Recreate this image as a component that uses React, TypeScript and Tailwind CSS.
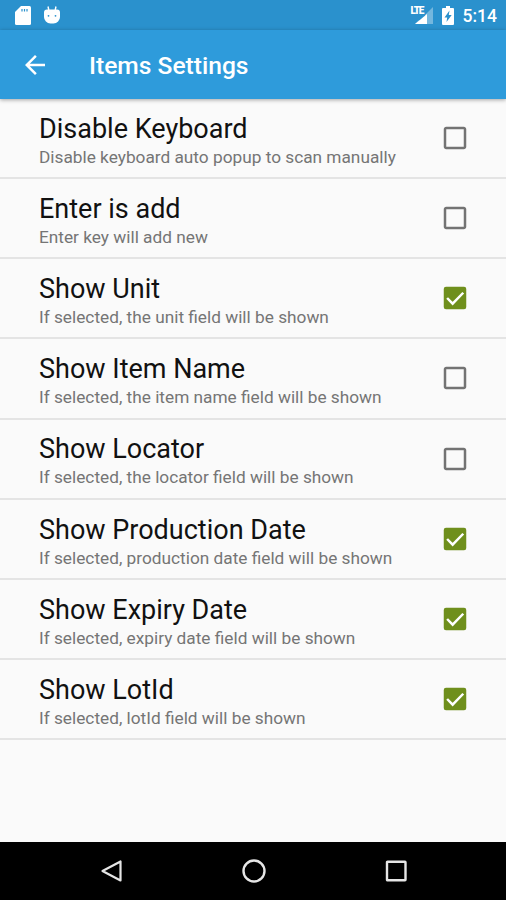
import clsx from "clsx"

const settings = [
  {
    title: "Disable Keyboard",
    summary: "Disable keyboard auto popup to scan manually",
    checked: false,
  },
  { title: "Enter is add", summary: "Enter key will add new", checked: false },
  {
    title: "Show Unit",
    summary: "If selected, the unit field will be shown",
    checked: true,
  },
  {
    title: "Show Item Name",
    summary: "If selected, the item name field will be shown",
    checked: false,
  },
  {
    title: "Show Locator",
    summary: "If selected, the locator field will be shown",
    checked: false,
  },
  {
    title: "Show Production Date",
    summary: "If selected, production date field will be shown",
    checked: true,
  },
  {
    title: "Show Expiry Date",
    summary: "If selected, expiry date field will be shown",
    checked: true,
  },
  {
    title: "Show LotId",
    summary: "If selected, lotId field will be shown",
    checked: true,
  },
]

function StatusBar() {
  return (
    <div className="flex h-[30px] items-center justify-between bg-[#2a91cd] pr-[9px] pl-[15px] text-white">
      <div className="flex items-center gap-[13px]">
        <svg viewBox="0 0 16 19" className="h-[19px] w-4" fill="currentColor">
          <path d="M6 0h8.500A1.500 1.500 0 0 1 16 1.500v16a1.500 1.500 0 0 1-1.500 1.500h-13A1.500 1.500 0 0 1 0 17.500V6z" />
          <path d="M7 3v2.500M9.500 3v2.500M12 3v2.500" stroke="#2a91cd" strokeWidth="1.200" />
        </svg>
        <svg viewBox="0 0 16 18" className="h-[18px] w-4" fill="currentColor">
          <path d="M4 0.500 4.800 4M12 0.500 11.200 4" stroke="currentColor" strokeWidth="1.400" />
          <path d="M3 3.500h10a3 3 0 0 1 3 3V11a6.500 6.500 0 0 1-6.500 6.500h-3A6.500 6.500 0 0 1 0 11V6.500a3 3 0 0 1 3-3z" />
          <circle cx="4.500" cy="9.800" r="0.900" fill="#2a91cd" />
          <circle cx="11.500" cy="9.800" r="0.900" fill="#2a91cd" />
        </svg>
      </div>
      <div className="flex items-center">
        <div className="relative h-[18px] w-[22px]">
          <span className="absolute top-0 left-0 text-[10px] leading-[10px] font-black tracking-[-1.200px]">
            LTE
          </span>
          <svg viewBox="0 0 22 18" className="h-[18px] w-[22px]" fill="currentColor">
            <path d="M22 1v17H4l3.500-3.500H14V9z" opacity=".35" />
            <path d="M16 8V18H4z" />
          </svg>
        </div>
        <svg viewBox="0 0 12 19" className="ml-[9px] h-[19px] w-3" fill="currentColor">
          <path
            fillRule="evenodd"
            d="M4 0h4v2h3a1 1 0 0 1 1 1v15a1 1 0 0 1-1 1H1a1 1 0 0 1-1-1V3a1 1 0 0 1 1-1h3zM7.500 4.500 2.500 11.500H5.200L4.500 16l5.200-7H6.800z"
          />
        </svg>
        <span className="ml-[9px] pt-[3px] text-[17.5px] leading-none font-medium">
          5:14
        </span>
      </div>
    </div>
  )
}

function Toolbar() {
  return (
    <header className="relative flex h-[69px] items-center bg-[#2e9bdb] pl-5 text-white shadow-[0_1px_4px_rgba(0,0,0,0.35)]">
      <svg viewBox="0 0 24 24" className="size-[30px]" fill="currentColor">
        <path d="M20 11H7.830l5.590-5.590L12 4l-8 8 8 8 1.410-1.410L7.830 13H20z" />
      </svg>
      <h1 className="ml-[39px] pt-1 text-[24.6px] leading-none font-medium">
        Items Settings
      </h1>
    </header>
  )
}

function Checkbox({ checked }: { checked: boolean }) {
  return (
    <svg
      viewBox="0 0 24 24"
      className={clsx("size-[30px]", checked ? "text-[#6f8f1c]" : "text-[#737373]")}
      fill="currentColor"
    >
      {checked ? (
        <>
          <rect x="3" y="3" width="18" height="18" rx="1.800" />
          <path d="m5.700 12 4.400 4.500 8.500-8.700" fill="none" stroke="#fff" strokeWidth="2" />
        </>
      ) : (
        <path d="M19 5v14H5V5h14m0-2H5c-1.100 0-2 .9-2 2v14c0 1.100.9 2 2 2h14c1.100 0 2-.9 2-2V5c0-1.100-.9-2-2-2z" />
      )}
    </svg>
  )
}

function NavigationBar() {
  return (
    <nav className="flex h-[58px] items-center justify-between bg-black pr-24 pl-[97px] text-[#e6e6e6]">
      <svg viewBox="0 0 28 28" className="size-7" fill="none" stroke="currentColor" strokeWidth="2.200">
        <path d="M23.500 4.500v19L5.500 14z" strokeLinejoin="round" />
      </svg>
      <svg viewBox="0 0 28 28" className="size-7" fill="none" stroke="currentColor" strokeWidth="2.400">
        <circle cx="14" cy="14" r="10.500" />
      </svg>
      <svg viewBox="0 0 28 28" className="size-7" fill="none" stroke="currentColor" strokeWidth="2.400">
        <rect x="5" y="4.800" width="18.500" height="18.500" rx="0.500" />
      </svg>
    </nav>
  )
}

export default function App() {
  return (
    <div className="flex h-[900px] w-[506px] flex-col overflow-hidden bg-[#fafafa] font-['Roboto',sans-serif]">
      <StatusBar />
      <Toolbar />
      <ul className="flex-1">
        {settings.map((item) => (
          <li
            key={item.title}
            className="flex h-[80.15px] items-center justify-between border-b-2 border-[#e4e4e4] pr-9 pl-[39px]"
          >
            <div className="pt-[5.5px]">
              <div className="text-[27px] leading-8 text-[#111]">{item.title}</div>
              <div className="text-[17.25px] leading-6 text-[#757575]">
                {item.summary}
              </div>
            </div>
            <Checkbox checked={item.checked} />
          </li>
        ))}
      </ul>
      <NavigationBar />
    </div>
  )
}
